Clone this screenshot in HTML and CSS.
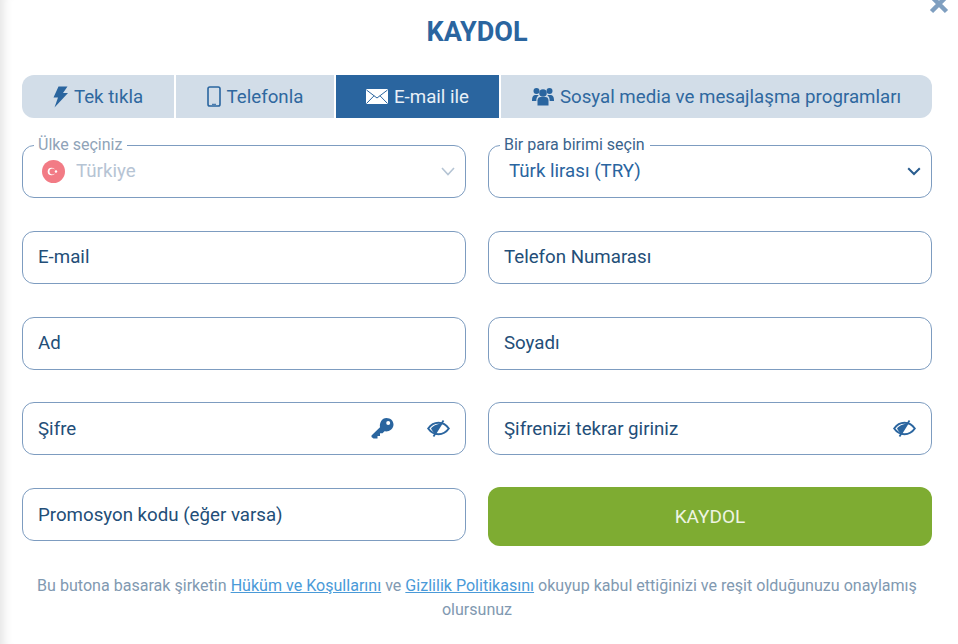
FILE: index.html
```html
<!DOCTYPE html>
<html>
<head>
<meta charset="utf-8">
<link rel="stylesheet" href="styles.css">
</head>
<body>
<div class="modal">
  <a class="close" href="#">
    <svg width="20" height="20" viewBox="0 0 20 20"><path d="M2.500 2.500L17.500 17.500M17.500 2.500L2.500 17.500" stroke="#7f9fc0" stroke-width="4.500" fill="none"/></svg>
  </a>
  <h1 class="title">KAYDOL</h1>

  <div class="tabs">
    <a class="tab tab-click" href="#">
      <svg width="15" height="22" viewBox="0 0 15 22"><path d="M5.500 0.500L14.500 0.500L10 7L15 7L1.500 21.500L5 11.500L0.500 11.500Z" fill="#2a659f"/></svg>
      Tek tıkla
    </a>
    <a class="tab tab-phone" href="#">
      <svg width="14" height="21" viewBox="0 0 14 21"><rect x="1" y="1" width="12" height="19" rx="1.800" fill="none" stroke="#2a659f" stroke-width="1.600"/><path d="M5 18.300H9" stroke="#2a659f" stroke-width="1"/></svg>
      Telefonla
    </a>
    <a class="tab tab-mail active" href="#">
      <svg width="22" height="15" viewBox="0 0 22 15"><rect width="22" height="15" rx="1" fill="#fff"/><path d="M0.500 1L11 9L21.500 1M0.500 14.500L8 6.800M21.500 14.500L14 6.800" fill="none" stroke="#2a659f" stroke-width="1"/></svg>
      E-mail ile
    </a>
    <a class="tab tab-social" href="#">
      <svg width="22" height="19" viewBox="0 0 22 19" fill="#2a659f"><circle cx="11" cy="6" r="3.800"/><circle cx="4.500" cy="4" r="3"/><circle cx="17.500" cy="4" r="3"/><path d="M5.500 18.500V13.500C5.500 11 7 10 8.500 10H13.500C15 10 16.500 11 16.500 13.500V18.500Z"/><path d="M0 13C0 9.500 1.500 8 3.300 8H6.800C5 9.500 4.300 11 4.300 14H0ZM22 13C22 9.500 20.500 8 18.700 8H15.200C17 9.500 17.700 11 17.700 14H22Z"/></svg>
      Sosyal media ve mesajlaşma programları
    </a>
  </div>

  <form class="form">
    <fieldset class="field field-disabled">
      <legend>Ülke seçiniz</legend>
      <div class="field-row">
        <svg class="flag" width="23" height="23" viewBox="0 0 23 23"><circle cx="11.500" cy="11.500" r="11.500" fill="#f27b85"/><circle cx="9.500" cy="11.500" r="3.800" fill="#fff"/><circle cx="10.500" cy="11.500" r="3" fill="#f27b85"/><circle cx="14" cy="11.500" r="1.200" fill="#fff"/></svg>
        <span class="value">Türkiye</span>
        <svg class="chevron" width="14" height="9" viewBox="0 0 14 9"><path d="M1 1L7 7.500L13 1" fill="none" stroke="#b5c4d4" stroke-width="1.600"/></svg>
      </div>
    </fieldset>

    <fieldset class="field">
      <legend>Bir para birimi seçin</legend>
      <div class="field-row">
        <span class="value">Türk lirası (TRY)</span>
        <svg class="chevron" width="14" height="9" viewBox="0 0 14 9"><path d="M1.200 1.200L7 7L12.800 1.200" fill="none" stroke="#2a5d8f" stroke-width="2"/></svg>
      </div>
    </fieldset>

    <div class="input">E-mail</div>
    <div class="input">Telefon Numarası</div>
    <div class="input">Ad</div>
    <div class="input">Soyadı</div>

    <div class="input">
      <span class="grow">Şifre</span>
      <svg class="key" width="23" height="23" viewBox="0 0 23 23"><path d="M0.500 18.500L9 10.200C8.300 6 10.800 1 15.500 1C19.500 1 22.500 3.800 22.500 7.500C22.500 12 18 15.200 13.500 14.300L11.500 16.300H9V19H6.500V21.500H2.500L0.500 20Z" fill="#2a659f"/><circle cx="17.200" cy="6" r="2" fill="#fff"/></svg>
      <svg class="eye" width="23" height="19" viewBox="0 0 23 19"><path d="M1.200 9.500C4 5.500 7.500 3.800 11.500 3.800C15.500 3.800 19 5.500 21.800 9.500C19 13.500 15.500 15.200 11.500 15.200C7.500 15.200 4 13.500 1.200 9.500Z" fill="none" stroke="#2a659f" stroke-width="2"/><path d="M4 9.500C6 7 9 5 14.500 4.500L8.500 15C6.500 13.500 5 11.500 4 9.500Z" fill="#2a659f"/><path d="M6.500 17.500L16.500 1.500" stroke="#2a659f" stroke-width="1.800"/></svg>
    </div>
    <div class="input">
      <span class="grow">Şifrenizi tekrar giriniz</span>
      <svg class="eye" width="23" height="19" viewBox="0 0 23 19"><path d="M1.200 9.500C4 5.500 7.500 3.800 11.500 3.800C15.500 3.800 19 5.500 21.800 9.500C19 13.500 15.500 15.200 11.500 15.200C7.500 15.200 4 13.500 1.200 9.500Z" fill="none" stroke="#2a659f" stroke-width="2"/><path d="M4 9.500C6 7 9 5 14.500 4.500L8.500 15C6.500 13.500 5 11.500 4 9.500Z" fill="#2a659f"/><path d="M6.500 17.500L16.500 1.500" stroke="#2a659f" stroke-width="1.800"/></svg>
    </div>

    <div class="input">Promosyon kodu (eğer varsa)</div>
    <button class="submit" type="button">KAYDOL</button>
  </form>

  <p class="terms">Bu butona basarak şirketin <a href="#">Hüküm ve Koşullarını</a> ve <a href="#">Gizlilik Politikasını</a> okuyup kabul ettiğinizi ve reşit olduğunuzu onaylamış <span class="terms-end">olursunuz</span></p>
</div>
</body>
</html>
```

FILE: styles.css
```css
* {box-sizing: border-box;}

html, body {
  height: 100%;
}

body {
  margin: 0;
  overflow: hidden;
  font-family: Roboto, "Liberation Sans", sans-serif;
  background-color: #fff;
  color: #234e78;
}

.modal {
  position: relative;
  height: 644px;
  padding: 0 26px 0 22px;
  box-shadow: inset 12px 0 10px -8px #e6e6e6;
}

.close {
  position: absolute;
  top: -6px;
  right: 9px;
  display: block;
  line-height: 0;
}

.title {
  margin: 0;
  padding-top: 16px;
  height: 75px;
  text-align: center;
  font-size: 27px;
  line-height: 32px;
  font-weight: 700;
  color: #2a659f;
}

.tabs {
  display: flex;
  gap: 2px;
  height: 43px;
}

.tab {
  display: flex;
  align-items: center;
  justify-content: center;
  gap: 6px;
  background-color: #d2dde8;
  color: #2f689f;
  font-size: 18.700px;
  text-decoration: none;
}

.tab.active {
  background-color: #2a659f;
  color: #e8f0f7;
}

.tab-click {
  width: 152px;
  border-radius: 12px 0 0 12px;
}

.tab-phone {
  width: 158px;
}

.tab-mail {
  width: 163px;
}

.tab-social {
  flex: 1;
  border-radius: 0 12px 12px 0;
}

.form {
  display: grid;
  grid-template-columns: 444px 444px;
  column-gap: 22px;
  grid-auto-rows: 53px;
  row-gap: 32.750px;
  margin: 27px 0 0;
}

.field {
  margin: 0;
  min-width: 0;
  height: 61px;
  margin-top: -8px;
  padding: 0 10px 0 19px;
  border: 1px solid #7d9cc0;
  border-radius: 12px;
}

.field legend {
  margin-left: -8px;
  padding: 0 5px 0 4px;
  font-size: 16px;
  line-height: 16px;
  color: #3a638c;
}

.field-row {
  display: flex;
  align-items: center;
  height: 36px;
}

.value {
  flex: 1;
  padding-left: 1px;
  font-size: 18.700px;
  color: #2a659f;
}

.field-disabled legend {
  color: #8fa3b8;
}

.field-disabled .value {
  color: #b6c4d4;
}

.flag {
  margin: 0 10px 0 0;
}

.input {
  display: flex;
  align-items: center;
  height: 53px;
  padding: 0 15px;
  border: 1px solid #7d9cc0;
  border-radius: 12px;
  font-size: 18.700px;
  color: #234e78;
}

.grow {
  flex: 1;
}

.key {
  margin-right: 33px;
}

.submit {
  height: 59px;
  margin-top: -1px;
  border: none;
  border-radius: 12px;
  background-color: #7eac32;
  color: #eef4e2;
  font-family: Roboto, "Liberation Sans", sans-serif;
  font-size: 19px;
}

.terms {
  margin: 33px 0 0;
  text-align: center;
  font-size: 16.070px;
  line-height: 24px;
  color: #8199b1;
}

.terms a {
  color: #4a9ad8;
}

.terms-end {
  display: block;
}
```
